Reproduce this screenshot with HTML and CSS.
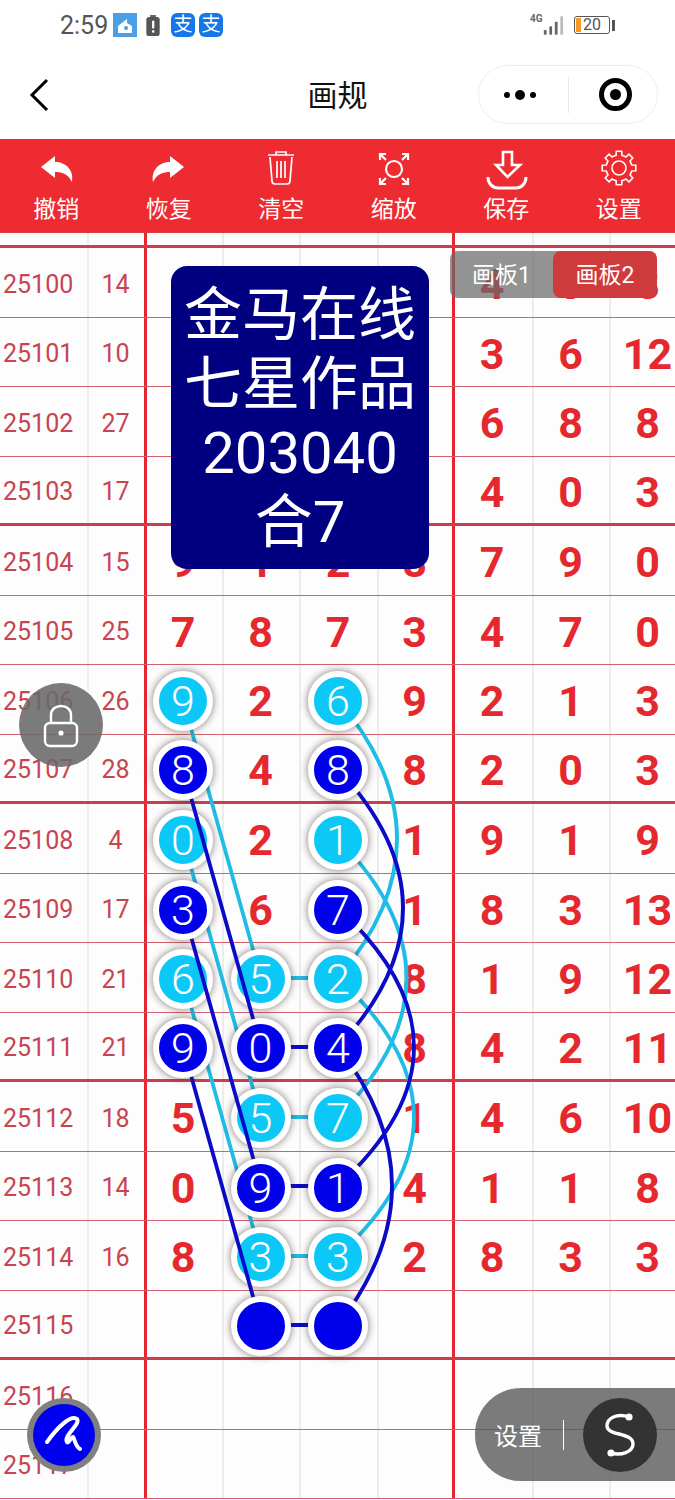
FILE: index.html
```html
<!DOCTYPE html>
<html lang="zh-CN">
<head>
  <meta charset="UTF-8">
  <meta name="viewport" content="width=device-width, initial-scale=1.0">
  <link rel="stylesheet" href="styles.css">
  <title>画规</title>
</head>
<body>
  <div class="status">
    <span class="time">2:59</span>
    <svg class="st-home" viewBox="0 0 24 24"><rect width="24" height="24" fill="#4a9fe6"/><path d="M5 13 L14 6 V10 L19 13 V20 H5Z" fill="#fff"/><circle cx="13" cy="15" r="2" fill="#4a9fe6"/></svg>
    <svg class="st-warn" viewBox="0 0 14 22"><rect x="4" y="0" width="6" height="3" fill="#666"/><rect x="0" y="2" width="14" height="20" rx="3" fill="#555"/><rect x="6" y="6" width="2.4" height="8" fill="#fff"/><rect x="6" y="16" width="2.4" height="2.4" fill="#fff"/></svg>
    <span class="st-pay">支</span>
    <span class="st-pay">支</span>
    <span class="st-gap"></span>
    <span class="st-net">4G</span>
    <svg class="st-bars" viewBox="0 0 24 22"><rect x="2" y="16" width="3" height="5" fill="#666"/><rect x="8" y="12" width="3" height="9" fill="#666"/><rect x="14" y="7" width="3" height="14" fill="#666"/><rect x="20" y="1" width="3" height="20" fill="#bbb"/></svg>
    <span class="st-batt"><i></i>20</span>
    <span class="st-cap"></span>
  </div>

  <div class="nav">
    <svg class="back" viewBox="0 0 24 36"><path d="M19 3 L4 18 L19 33" fill="none" stroke="#000" stroke-width="3"/></svg>
    <span class="title">画规</span>
    <div class="capsule">
      <span class="dots"><i></i><b></b><i></i></span>
      <span class="sep"></span>
      <span class="target"></span>
    </div>
  </div>

  <div class="tools">
    <div class="tool">
      <svg viewBox="0 0 40 40"><path d="M5 19 L19 8 V14 C30 14 38 22 36 34 C32 26 26 24 19 24 V30Z" fill="#fff"/></svg>
      <span>撤销</span>
    </div>
    <div class="tool">
      <svg viewBox="0 0 40 40"><path transform="matrix(-1 0 0 1 40 0)" d="M5 19 L19 8 V14 C30 14 38 22 36 34 C32 26 26 24 19 24 V30Z" fill="#fff"/></svg>
      <span>恢复</span>
    </div>
    <div class="tool">
      <svg viewBox="0 0 40 40" fill="none" stroke="#fff" stroke-width="1.7"><path d="M7 7H33M15 7V4H25V7M9 9 L11 33 Q11 36 14 36 H26 Q29 36 29 33 L31 9M16 13V30M20 13V30M24 13V30"/></svg>
      <span>清空</span>
    </div>
    <div class="tool">
      <svg viewBox="0 0 40 40" fill="none" stroke="#fff" stroke-width="2.2"><circle cx="20" cy="21" r="8"/><path d="M6 12V6H12M6 6L12 12M28 6H34V12M34 6L28 12M6 30V36H12M6 36L12 30M34 30V36H28M34 36L28 30"/></svg>
      <span>缩放</span>
    </div>
    <div class="tool">
      <svg viewBox="0 0 40 40" fill="none" stroke="#fff"><path stroke-width="2.6" d="M17 4H26V17H34L21.5 29L10 17H17Z"/><path stroke-width="3" d="M2 29C2 36 7 40 12 40H30C35 40 40 36 40 29"/></svg>
      <span>保存</span>
    </div>
    <div class="tool">
      <svg viewBox="0 0 40 40" fill="none" stroke="#fff" stroke-width="1.6">
        <circle cx="20" cy="20" r="7"/>
        <g id="tooth"><path d="M32 15L32.7 17.1L36.8 17.3V22.7L32.7 22.9L32 25"/></g>
        <use href="#tooth" transform="rotate(45 20 20)"/>
        <use href="#tooth" transform="rotate(90 20 20)"/>
        <use href="#tooth" transform="rotate(135 20 20)"/>
        <use href="#tooth" transform="rotate(180 20 20)"/>
        <use href="#tooth" transform="rotate(225 20 20)"/>
        <use href="#tooth" transform="rotate(270 20 20)"/>
        <use href="#tooth" transform="rotate(315 20 20)"/>
      </svg>
      <span>设置</span>
    </div>
  </div>

  <div class="board">
    <div class="rows">
      <div class="row head"><span></span><span></span><span></span><span></span><span></span><span></span><span></span><span></span><span></span></div>
      <div class="row"><span>25100</span><span>14</span><span></span><span></span><span></span><span></span><span>4</span><span>3</span><span>8</span></div>
      <div class="row"><span>25101</span><span>10</span><span></span><span></span><span></span><span></span><span>3</span><span>6</span><span>12</span></div>
      <div class="row"><span>25102</span><span>27</span><span></span><span></span><span></span><span></span><span>6</span><span>8</span><span>8</span></div>
      <div class="row"><span>25103</span><span>17</span><span></span><span></span><span></span><span></span><span>4</span><span>0</span><span>3</span></div>
      <div class="row"><span>25104</span><span>15</span><span>9</span><span>1</span><span>2</span><span>8</span><span>7</span><span>9</span><span>0</span></div>
      <div class="row"><span>25105</span><span>25</span><span>7</span><span>8</span><span>7</span><span>3</span><span>4</span><span>7</span><span>0</span></div>
      <div class="row"><span>25106</span><span>26</span><span><b class="node cy">9</b></span><span>2</span><span><b class="node cy">6</b></span><span>9</span><span>2</span><span>1</span><span>3</span></div>
      <div class="row"><span>25107</span><span>28</span><span><b class="node bl">8</b></span><span>4</span><span><b class="node bl">8</b></span><span>8</span><span>2</span><span>0</span><span>3</span></div>
      <div class="row"><span>25108</span><span>4</span><span><b class="node cy">0</b></span><span>2</span><span><b class="node cy">1</b></span><span>1</span><span>9</span><span>1</span><span>9</span></div>
      <div class="row"><span>25109</span><span>17</span><span><b class="node bl">3</b></span><span>6</span><span><b class="node bl">7</b></span><span>1</span><span>8</span><span>3</span><span>13</span></div>
      <div class="row"><span>25110</span><span>21</span><span><b class="node cy">6</b></span><span><b class="node cy">5</b></span><span><b class="node cy">2</b></span><span>8</span><span>1</span><span>9</span><span>12</span></div>
      <div class="row"><span>25111</span><span>21</span><span><b class="node bl">9</b></span><span><b class="node bl">0</b></span><span><b class="node bl">4</b></span><span>8</span><span>4</span><span>2</span><span>11</span></div>
      <div class="row"><span>25112</span><span>18</span><span>5</span><span><b class="node cy">5</b></span><span><b class="node cy">7</b></span><span>1</span><span>4</span><span>6</span><span>10</span></div>
      <div class="row"><span>25113</span><span>14</span><span>0</span><span><b class="node bl">9</b></span><span><b class="node bl">1</b></span><span>4</span><span>1</span><span>1</span><span>8</span></div>
      <div class="row"><span>25114</span><span>16</span><span>8</span><span><b class="node cy">3</b></span><span><b class="node cy">3</b></span><span>2</span><span>8</span><span>3</span><span>3</span></div>
      <div class="row"><span>25115</span><span></span><span></span><span><b class="node bl"></b></span><span><b class="node bl"></b></span><span></span><span></span><span></span><span></span></div>
      <div class="row"><span>25116</span><span></span><span></span><span></span><span></span><span></span><span></span><span></span><span></span></div>
      <div class="row"><span>25117</span><span></span><span></span><span></span><span></span><span></span><span></span><span></span><span></span></div>
    </div>

    <svg class="lines cyan" viewBox="0 232 675 1268">
      <path d="M183 700L261 978M183 839L261 1117M183 978L261 1256"/>
      <path d="M261 978H338M261 1117H338M261 1256H338"/>
      <path d="M338 700Q456 839 338 978M338 839Q475 978 338 1117M338 978Q490 1117 338 1256"/>
    </svg>
    <svg class="lines blue" viewBox="0 232 675 1268">
      <path d="M183 769L261 1047M183 908L261 1186M183 1047L261 1325"/>
      <path d="M261 1047H338M261 1186H338M261 1325H338"/>
      <path d="M338 769Q468 908 338 1047M338 908Q490 1047 338 1186M338 1047Q446 1186 338 1325"/>
    </svg>

    <div class="panel">金马在线<br>七星作品<br>203040<br>合7</div>

    <div class="tabs">
      <span>画板1</span>
      <span class="on">画板2</span>
    </div>

    <div class="lock">
      <svg viewBox="0 0 84 84" fill="none" stroke="#fff" stroke-width="2.4"><rect x="26" y="40" width="32" height="23" rx="5"/><path d="M32 40V32C32 20 52 20 52 32V40"/><circle cx="42" cy="50" r="2.6" fill="#fff" stroke="none"/></svg>
    </div>

    <div class="brush">
      <svg viewBox="0 0 62 62"><path d="M14 38C24 24 38 10 44 15C48 20 30 32 34 38C36 40 38 32 40 33C42 35 42 42 47 45" fill="none" stroke="#fff" stroke-width="4" stroke-linecap="round"/></svg>
    </div>

    <div class="pill">
      <span class="pill-text">设置</span>
      <span class="pill-sep"></span>
      <span class="pill-btn">
        <svg viewBox="0 0 74 74" fill="none" stroke="#fff" stroke-width="3.4"><path d="M46 19C34 15 24 20 24 28C24 38 50 34 50 46C50 54 38 58 28 55"/><circle cx="46" cy="19" r="3.6" fill="#fff" stroke="none"/><circle cx="28" cy="55" r="3.6" fill="#fff" stroke="none"/></svg>
      </span>
    </div>
  </div>
</body>
</html>
```

FILE: styles.css
```css
*, *::before, *::after {
  margin: 0;
  padding: 0;
  box-sizing: border-box;
}

body {
  width: 675px;
  background: #fff;
  font-family: Roboto, "Noto Sans CJK SC", sans-serif;
  overflow-x: hidden;
}

/* status bar */
.status {
  height: 50px;
  display: flex;
  align-items: center;
  padding-left: 60px;
}

.time {
  font-size: 25px;
  color: #555;
  width: 53px;
}

.st-home {
  width: 24px;
  height: 24px;
  margin-right: 9px;
}

.st-warn {
  width: 14px;
  height: 21px;
  margin-right: 11px;
}

.st-pay {
  width: 24px;
  height: 24px;
  margin-right: 4px;
  border-radius: 6px;
  background: #1677e8;
  color: #fff;
  font-size: 19px;
  line-height: 24px;
  text-align: center;
}

.st-gap {
  flex: 1;
}

.st-net {
  font-size: 10px;
  font-weight: 700;
  color: #666;
  width: 12px;
  align-self: flex-start;
  margin-top: 13px;
}

.st-bars {
  width: 22px;
  height: 21px;
  margin-right: 8px;
}

.st-batt {
  position: relative;
  width: 36px;
  height: 18px;
  margin-left: 2px;
  border: 1.5px solid #555;
  border-radius: 3px;
  font-size: 16px;
  line-height: 15px;
  color: #555;
  text-align: center;
}

.st-batt i {
  position: absolute;
  left: 1px;
  top: 1px;
  bottom: 1px;
  width: 5px;
  background: #f59a23;
}

.st-cap {
  width: 3px;
  height: 11px;
  margin: 0 60px 0 2px;
  background: #555;
}

/* title bar */
.nav {
  height: 89px;
  display: flex;
  align-items: center;
  padding: 0 17px 0 28px;
  position: relative;
}

.back {
  width: 24px;
  height: 36px;
}

.title {
  position: absolute;
  left: 0;
  right: 0;
  padding-bottom: 4px;
  text-align: center;
  font-size: 30px;
  color: #111;
}

.capsule {
  margin-left: auto;
  width: 180px;
  height: 59px;
  border: 1px solid #eee;
  border-radius: 30px;
  display: flex;
  align-items: center;
  padding-left: 25px;
}

.dots {
  display: flex;
  align-items: center;
  gap: 5px;
  width: 64px;
}

.dots i {
  width: 6px;
  height: 6px;
  border-radius: 50%;
  background: #000;
}

.dots b {
  width: 10px;
  height: 10px;
  border-radius: 50%;
  background: #000;
}

.sep {
  width: 1px;
  height: 36px;
  background: #e8e8e8;
  margin-right: 30px;
}

.target {
  width: 33px;
  height: 33px;
  border-radius: 50%;
  border: 5px solid #000;
  display: flex;
  align-items: center;
  justify-content: center;
}

.target::after {
  content: "";
  width: 11px;
  height: 11px;
  border-radius: 50%;
  background: #000;
}

/* red toolbar */
.tools {
  height: 93px;
  background: #ee2b31;
  display: flex;
  padding-top: 9px;
}

.tool {
  flex: 1;
  display: flex;
  flex-direction: column;
  align-items: center;
  color: #fff;
}

.tool svg {
  width: 40px;
  height: 40px;
  overflow: visible;
}

.tool span {
  font-size: 23px;
  line-height: 34px;
  margin-top: 5px;
}

/* number board */
.board {
  position: relative;
  height: 1268px;
  overflow: hidden;
  background: #fdfdfe;
}

.row {
  display: grid;
  grid-template-columns: 87px 57px 78px 77px 78px 75px 80px 77px 77px;
  height: 69.5px;
  border-bottom: 1px solid #d4606c;
}

.row:nth-child(4n+1) {
  border-bottom: 3px solid #c9404a;
}

.head {
  height: 16px;
  border-top: 1px solid #e03a44;
}

.row span {
  display: flex;
  align-items: center;
  justify-content: center;
  padding-top: 4px;
  box-shadow: inset 2px 0 0 #ececee;
  font-size: 43px;
  font-weight: 700;
  color: #e4282e;
}

.row span:nth-child(1) {
  justify-content: flex-start;
  padding-left: 3px;
  box-shadow: none;
  font-size: 25px;
  font-weight: 400;
  color: #c8444f;
}

.row span:nth-child(2) {
  font-size: 25px;
  font-weight: 400;
  color: #c8444f;
}

.row span:nth-child(3),
.row span:nth-child(7) {
  box-shadow: inset 3px 0 0 #e6262e;
}

.node {
  position: relative;
  width: 60px;
  height: 60px;
  border: 6px solid #fff;
  border-radius: 50%;
  box-shadow: 0 0 7px 1px rgba(60, 40, 30, .5);
  display: flex;
  align-items: center;
  justify-content: center;
  color: #fff;
  font-size: 43px;
  font-weight: 300;
}

.node.cy {
  background: #0cc8f6;
  z-index: 2;
}

.node.bl {
  background: #0000ea;
  z-index: 4;
}

.lines {
  position: absolute;
  left: 0;
  top: 0;
  width: 675px;
  height: 1268px;
  fill: none;
  stroke-width: 3.8;
}

.lines.cyan {
  stroke: #1fbde6;
  z-index: 1;
}

.lines.blue {
  stroke: #0a0ac8;
  z-index: 3;
}

.panel {
  position: absolute;
  left: 171px;
  top: 34px;
  width: 258px;
  height: 303px;
  padding-top: 15px;
  background: #000080;
  border-radius: 16px;
  color: #fff;
  font-size: 58px;
  line-height: 69px;
  text-align: center;
  z-index: 10;
}

.tabs {
  position: absolute;
  left: 450px;
  top: 19px;
  width: 207px;
  height: 47px;
  display: flex;
  background: rgba(105, 105, 105, .72);
  border-radius: 8px;
  color: #fff;
  font-size: 23px;
  z-index: 10;
}

.tabs span {
  width: 103px;
  display: flex;
  align-items: center;
  justify-content: center;
  padding-bottom: 4px;
}

.tabs .on {
  width: 104px;
  background: #cf3a3c;
  border-radius: 8px;
}

.lock {
  position: absolute;
  left: 19px;
  top: 451px;
  width: 84px;
  height: 84px;
  border-radius: 50%;
  background: rgba(105, 105, 105, .88);
  z-index: 10;
}

.brush {
  position: absolute;
  left: 27px;
  top: 1166px;
  width: 74px;
  height: 74px;
  padding: 6px;
  border-radius: 50%;
  background: #808080;
  z-index: 10;
}

.brush svg {
  display: block;
  width: 62px;
  height: 62px;
  border-radius: 50%;
  background: #0000f0;
}

.pill {
  position: absolute;
  right: 0;
  top: 1156px;
  width: 200px;
  height: 93px;
  padding-left: 19px;
  display: flex;
  align-items: center;
  background: rgba(90, 90, 90, .8);
  border-radius: 46px 0 0 46px;
  color: #fff;
  font-size: 24px;
  z-index: 10;
}

.pill-text {
  width: 50px;
}

.pill-sep {
  width: 1px;
  height: 30px;
  margin: 0 19px;
  background: #fff;
}

.pill-btn {
  width: 74px;
  height: 74px;
  border-radius: 50%;
  background: #333;
}

.pill-btn svg,
.lock svg {
  display: block;
  width: 100%;
  height: 100%;
}
```
